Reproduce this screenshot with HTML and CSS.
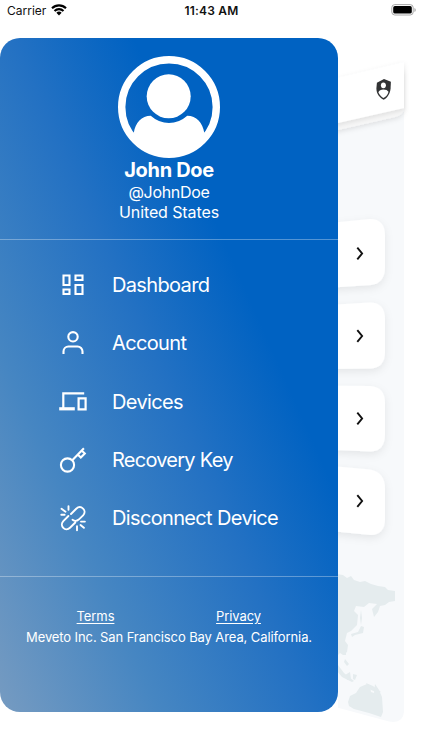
FILE: index.html
```html
<!DOCTYPE html>
<html lang="en">
<head>
<meta charset="utf-8">
<title>Meveto</title>
<link rel="stylesheet" href="styles.css">
</head>
<body>
<header class="status">
  <div class="carrier"><span>Carrier</span>
    <svg width="16" height="12" viewBox="0 0 16 12"><g fill="none" stroke="#000" stroke-width="2.1"><path d="M1 4.2a10 10 0 0 1 14 0"/><path d="M3.5 6.9a6.5 6.5 0 0 1 9 0"/></g><path d="M8 11.5 5.4 8.8a3.8 3.8 0 0 1 5.2 0z"/></svg>
  </div>
  <time class="clock">11:43 AM</time>
  <svg class="battery" width="26" height="12" viewBox="0 0 26 12"><rect x="1.800" y=".6" width="21.400" height="10.4" rx="3" fill="#fff" stroke="#a8a8a8"/><rect x="3.200" y="2" width="18.600" height="7.6" rx="1.7"/><path d="M24.500 4v4q1.2-.7 1.2-2T24.500 4" fill="#999"/></svg>
</header>
<main class="stage">
  <nav class="drawer">
    <section class="profile">
      <svg class="avatar" width="102" height="102" viewBox="0 0 102 102"><circle cx="51" cy="51" r="47.3" fill="none" stroke="#fff" stroke-width="7.4"/><circle cx="50.7" cy="40.3" r="22" fill="#fff"/><path d="M15.800 77c1.400-10.500 8-17.300 16.900-17.300q8.300 7.300 18.300 7.300t18.300-7.300c9 0 15.500 6.800 17 17.300-6 13-20 22-35.300 22s-29.200-9-35.200-22z" fill="#fff"/></svg>
      <h1 class="name">John Doe</h1>
      <p class="meta handle">@JohnDoe</p>
      <p class="meta country">United States</p>
    </section>
    <ul class="menu">
      <li><svg viewBox="0 0 28 28"><path d="M4.500 4.500h6v9.500h-6zM16.500 4.500h7v4.500h-7zM4.500 18.500h6v4.500h-6zM16.500 14h7v9h-7z"/></svg><span class="t1">Dashboard</span></li>
      <li><svg viewBox="0 0 28 28"><circle cx="14" cy="7.800" r="4.700"/><path d="M4.500 25v-2.500a5 5 0 0 1 5-5h9a5 5 0 0 1 5 5V25"/></svg><span class="t2">Account</span></li>
      <li><svg viewBox="0 0 28 28"><path d="M4.300 20V5.400h20.900" stroke-width="2.200"/><path d="M.2 20.800h15.600" stroke-width="3.200"/><path d="M19.600 10.400h7v11h-7z" stroke-width="2.200"/></svg><span class="t3">Devices</span></li>
      <li><svg viewBox="0 0 28 28"><circle cx="8.500" cy="19" r="6.600"/><path d="m13.300 14.200 11.600-12M18.700 8.600l3.100 3 4-4.100-3.100-3"/></svg><span class="t4">Recovery Key</span></li>
      <li><svg viewBox="0 0 28 28"><g stroke-width="1.900" stroke-linecap="round"><path d="m12 10 5.200-5.200c4.700-4.400 11.300 1.600 6.900 6.600l-4.400 4.200q-3 2.500-6.200.1M9.400 12l-5.100 5.100c-4.300 4.700 2 11.200 6.700 6.700l5.300-5.300"/><path d="M2.500 4.800l4 2.900M2.300 10.800h3.300M9.500 2.200v3.600M21.500 21l3.400 2.800M22 17.600h3.900M18 22.300v3.900"/></g></svg><span class="t5">Disconnect Device</span></li>
    </ul>
    <footer class="foot">
      <div class="links"><a href="#">Terms</a><a href="#">Privacy</a></div>
      <p class="address">Meveto Inc. San Francisco Bay Area, California.</p>
    </footer>
  </nav>
  <!-- Tilted page showing behind the open drawer; user units are window pixels -->
  <svg class="page" width="84" height="712" viewBox="338 38 84 712">
    <defs>
      <filter id="soft" x="-40%" y="-40%" width="180%" height="180%"><feDropShadow dx="0" dy="3" stdDeviation="4" flood-color="#000" flood-opacity=".08"/></filter>
      <filter id="bar" x="-40%" y="-40%" width="180%" height="180%"><feDropShadow dx="0" dy="2" stdDeviation="2.500" flood-color="#000" flood-opacity=".1"/></filter>
    </defs>
    <path d="M320 82 404 62V712q-1 12-15 9.500L320 703z" fill="#f7f9fb"/>
    <path d="M320 90 404 70V109q-1 6-9 8L320 134z" fill="#f7f7f7" filter="url(#bar)"/>
    <path d="M320 82 404 62V108L320 127z" fill="#fff" filter="url(#bar)"/>
    <path d="m384 79 6.900 2.800-.3 6.400c-.4 5.200-3.300 9.600-6.900 11.600-3.900-2-7.300-5.500-7.300-11.300l.5-5.800z" fill="#323334"/>
    <ellipse cx="383.400" cy="85.300" rx="2.500" ry="2.900" fill="#fff"/>
    <path d="M378.400 92.300q1.200-2.700 5-2.700t5.100 2.100c-.9 3.200-2.700 5.100-5.100 6.300-2.200-1.300-4.100-3.100-5-5.700z" fill="#fff"/>
    <g fill="#fff" filter="url(#soft)">
      <path d="M310 225 370 219q15 0 15 17v31q0 16-14 18L310 289z"/>
      <path d="M310 306 370 302.500q15 0 15 17v32q0 16-14 17L310 369z"/>
      <path d="M310 385.500 370 386q15 1 15 17v31q0 17-14 17.500L310 449z"/>
      <path d="M310 464 370 469.500q15 3 15 19v30q0 16-14 16.500L310 529z"/>
    </g>
    <path d="m357.300 247.700 4.800 5.800-4.800 5.800M357.300 330.200l4.800 5.800-4.800 5.800M357.300 412.700l4.800 5.800-4.800 5.800M357.300 495.200l4.800 5.800-4.800 5.800" fill="none" stroke="#111" stroke-width="1.900"/>
    <g fill="#e5ecee">
      <path d="M336 574l7 1 4 3 4-2 3 4 6 2 5-1 6 3 7 2 7 1 3 3 7 1v10l-6 1-4 3-5 1-2 6-4 5-2-8 5-5-8-1-5 4-8-1-2 5 4 4-1 10-6 6-4 2-2 8 3 4-1 7-4 3-3-2-4 4z"/>
      <path d="M361 610l1 8-1 7-1-7zM361 626l3 1-1 6-8 2-3 2-1-3 7-2zM343 649l3 2v4h-3zM345 659l4 5-2 2-3-4zM338 665l6 8 10 8-2 1-10-5-6-7zM345 675l5-3 1 7-4 1zM353 674l4 1-2 5-2-1zM366 683l7 3 8 6-3 1-9-4z"/>
      <path d="M348 702l2-6 6-3 4-6 7-3 3 2 1 6 3 1 1-9 4 6 3 7 1 15-2 5-12-4-15-4-5-3z"/>
    </g>
  </svg>
</main>
</body>
</html>
```
FILE: styles.css
```css
* { box-sizing: border-box; margin: 0; padding: 0; }
body { width: 422px; height: 750px; overflow: hidden; background: #fff; font-family: Inter, "Liberation Sans", sans-serif; }
.status { display: grid; grid-template-columns: 1fr auto 1fr; height: 38px; padding: 3px 6px 0 7px; color: #111; font-size: 12px; line-height: 15px; }
.carrier { display: flex; gap: 5px; }
.carrier svg { margin-top: 1px; }
.clock { font-weight: 600; letter-spacing: .2px; }
.battery { justify-self: end; margin-top: 1px; }
.stage { display: flex; height: 712px; }
.drawer { display: flex; flex-direction: column; flex: none; width: 338px; height: 674px; border-radius: 20px; overflow: hidden; color: #fff; background: linear-gradient(66deg, #769bc1 0%, #4686c2 25%, #2371c3 49%, #0062c2 68%); }
.profile { display: flex; flex-direction: column; align-items: center; height: 202px; padding-top: 17.500px; border-bottom: 1px solid rgba(255, 255, 255, .32); text-align: center; }
.avatar { flex: none; }
.name { margin-top: -1px; font-size: 20px; line-height: 26px; letter-spacing: -.35px; }
.meta { font-size: 16px; line-height: 20px; letter-spacing: -.1px; }
.handle { margin-top: -1px; letter-spacing: -.3px; }
.menu { display: flex; flex-direction: column; height: 336.500px; padding: 15.600px 0 0 59px; list-style: none; border-bottom: 1px solid rgba(255, 255, 255, .32); }
.menu li { display: flex; align-items: center; height: 58.400px; gap: 25px; font-size: 20px; letter-spacing: -.65px; }
.menu svg { width: 28px; height: 28px; fill: none; stroke: #fff; stroke-width: 2.1; overflow: visible; }
.t4 { letter-spacing: -.75px; }
.foot { padding-top: 29px; font-size: 13px; line-height: 21px; letter-spacing: -.1px; text-align: center; }
.links { display: grid; grid-template-columns: 1fr 1fr; padding: 0 28px 0 24px; }
.links a { color: #fff; text-underline-offset: 2px; }
.page { flex: none; }
```
